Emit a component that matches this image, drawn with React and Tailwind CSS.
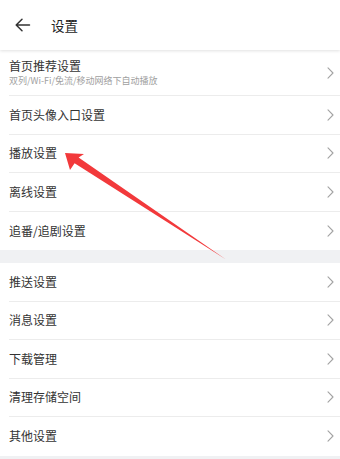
import React from "react"

function Chevron() {
  return (
    <svg width="7" height="12" viewBox="0 0 7 12" fill="none" className="shrink-0">
      <path d="M1 0.8 L6 6 L1 11.2" stroke="#a3a3a3" strokeWidth="1.1" strokeLinecap="round" strokeLinejoin="round" />
    </svg>
  )
}

function Row({ title, last }) {
  return (
    <div className="pl-[9px] bg-white">
      <div
        className={
          "flex items-center justify-between pr-[6px] h-[38.5px] " +
          (last ? "" : "border-b border-[#ececec]")
        }
      >
        <span className="text-[12px] text-[#333]">{title}</span>
        <Chevron />
      </div>
    </div>
  )
}

const first = ["首页头像入口设置", "播放设置", "离线设置", "追番/追剧设置"]
const second = ["推送设置", "消息设置", "下载管理", "清理存储空间", "其他设置"]

export default function App() {
  return (
    <div
      className="relative w-[340px] h-[459px] overflow-hidden bg-[#f0f1f3]"
      style={{ fontFamily: '"Noto Sans CJK SC", "Noto Sans", sans-serif' }}
    >
      {/* header */}
      <div className="flex items-center h-[50px] bg-white shadow-[0_1px_3px_rgba(0,0,0,0.12)] relative z-10">
        <svg width="16" height="14" viewBox="0 0 16 14" fill="none" className="ml-[15px]">
          <path d="M14.5 7 H1.5 M7 1.2 L1.2 7 L7 12.8" stroke="#333" strokeWidth="1.5" strokeLinecap="round" strokeLinejoin="round" />
        </svg>
        <span className="ml-[20px] text-[13.5px] text-[#222]">设置</span>
      </div>

      {/* section 1 */}
      <div className="bg-white">
        <div className="pl-[9px]">
          <div className="flex items-center justify-between pr-[6px] h-[46px] border-b border-[#ececec]">
            <div className="flex flex-col leading-none">
              <span className="text-[12px] text-[#333]">首页推荐设置</span>
              <span className="mt-[4px] text-[9px] text-[#a0a0a0]">双列/Wi-Fi/免流/移动网络下自动播放</span>
            </div>
            <Chevron />
          </div>
        </div>
        {first.map((t, i) => (
          <Row key={t} title={t} last={i === first.length - 1} />
        ))}
      </div>

      <div className="h-[13px]" />

      {/* section 2 */}
      <div className="bg-white">
        {second.map((t, i) => (
          <Row key={t} title={t} last={i === second.length - 1} />
        ))}
      </div>

      {/* red annotation arrow */}
      <svg className="absolute left-0 top-0 pointer-events-none" width="340" height="459" viewBox="0 0 340 459">
        <polygon
          points="65,153 84,154 78.6,157.6 226,259.5 74.6,163.2 70,170"
          fill="#f2393b"
        />
      </svg>
    </div>
  )
}
